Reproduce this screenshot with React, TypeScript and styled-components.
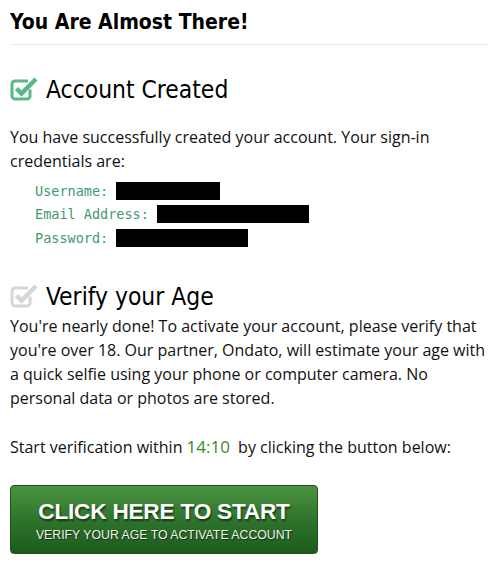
import React from "react";
import styled, { createGlobalStyle } from "styled-components";

const GlobalStyle = createGlobalStyle`
  body {
    margin: 0;
    background: #fff;
    color: #111;
    font-family: "Open Sans", "Liberation Sans", sans-serif;
  }
`;

const CheckIcon = ({ color }: { color: string }) => (
  <svg width="28" height="26" viewBox="0 0 28 26">
    <path
      d="M20 13.5v6.5a3 3 0 0 1-3 3H5a3 3 0 0 1-3-3V8a3 3 0 0 1 3-3h13"
      fill="none"
      stroke={color}
      strokeWidth="3"
    />
    <path
      d="M6.5 12.5l5 5L26 3"
      fill="none"
      stroke={color}
      strokeWidth="4.5"
      strokeLinejoin="miter"
    />
  </svg>
);

function App() {
  return (
    <Page>
      <GlobalStyle />
      <Title>You Are Almost There!</Title>
      <Divider />

      <Heading $top={29}>
        <CheckIcon color="#5ab887" />
        Account Created
      </Heading>
      <Text $top={19}>
        You have successfully created your account. Your sign-in credentials
        are:
      </Text>
      <Credentials>
        <CredRow>
          Username: <Redacted $w={104} />
        </CredRow>
        <CredRow>
          Email Address: <Redacted $w={152} />
        </CredRow>
        <CredRow>
          Password: <Redacted $w={132} />
        </CredRow>
      </Credentials>

      <Heading $top={31}>
        <CheckIcon color="#d6d6d6" />
        Verify your Age
      </Heading>
      <Text $top={1}>
        You're nearly done! To activate your account, please verify that you're
        over 18. Our partner, Ondato, will estimate your age with a quick selfie
        using your phone or computer camera. No personal data or photos are
        stored.
      </Text>
      <Text $top={25}>
        Start verification within <Timer>14:10</Timer> by clicking the button
        below:
      </Text>

      <StartButton>
        <ButtonMain>CLICK HERE TO START</ButtonMain>
        <ButtonSub>VERIFY YOUR AGE TO ACTIVATE ACCOUNT</ButtonSub>
      </StartButton>
    </Page>
  );
}

const Page = styled.div`
  width: 500px;
  padding: 0 10px;
  box-sizing: border-box;
`;

const Title = styled.h1`
  margin: 0;
  padding-top: 9px;
  font-family: "DejaVu Sans Condensed", "DejaVu Sans", sans-serif;
  font-weight: bold;
  font-size: 21px;
  line-height: 26px;
  color: #000;
`;

const Divider = styled.div`
  height: 1px;
  background: #e6e6e6;
  margin: 9px 2px 0;
`;

const Heading = styled.h2<{ $top: number }>`
  display: flex;
  align-items: center;
  gap: 8px;
  margin: ${(p) => p.$top}px 0 0;
  font-family: "DejaVu Sans Condensed", "DejaVu Sans", sans-serif;
  font-weight: normal;
  font-size: 24.4px;
  line-height: 32px;
  color: #000;
  svg {
    flex: none;
    margin-top: -2px;
  }
`;

const Text = styled.p<{ $top: number }>`
  margin: ${(p) => p.$top}px 0 0;
  font-size: 16px;
  line-height: 24px;
  color: #111;
`;

const Credentials = styled.div`
  margin: 6px 0 0 25px;
`;

const CredRow = styled.div`
  display: flex;
  align-items: center;
  height: 23.5px;
  font-family: "DejaVu Sans Mono", "Liberation Mono", monospace;
  font-size: 13.5px;
  color: #3d9b6c;
  white-space: pre;
`;

const Redacted = styled.span<{ $w: number }>`
  display: inline-block;
  width: ${(p) => p.$w}px;
  height: 18px;
  background: #000;
`;

const Timer = styled.span`
  color: #3a8a26;
  font-size: 17px;
  margin-right: 4px;
`;

const StartButton = styled.button`
  display: flex;
  flex-direction: column;
  align-items: center;
  width: 308px;
  height: 69px;
  margin-top: 26px;
  padding: 13px 0 0;
  box-sizing: border-box;
  border: 1px solid #1d521d;
  border-radius: 4px;
  background: linear-gradient(#4a923f, #2c722b 55%, #1e5a1e);
  color: #fff;
  font-family: "Liberation Sans", Arial, sans-serif;
  cursor: pointer;
  text-shadow: 1px 2px 2px rgba(0, 0, 0, 0.55);
`;

const ButtonMain = styled.span`
  font-weight: bold;
  font-size: 22.6px;
  line-height: 26px;
  letter-spacing: -0.2px;
`;

const ButtonSub = styled.span`
  margin-top: 2px;
  font-size: 12.3px;
  line-height: 16px;
  color: #f2f2e8;
  text-shadow: 1px 1px 1px rgba(0, 0, 0, 0.5);
`;

export default App;
